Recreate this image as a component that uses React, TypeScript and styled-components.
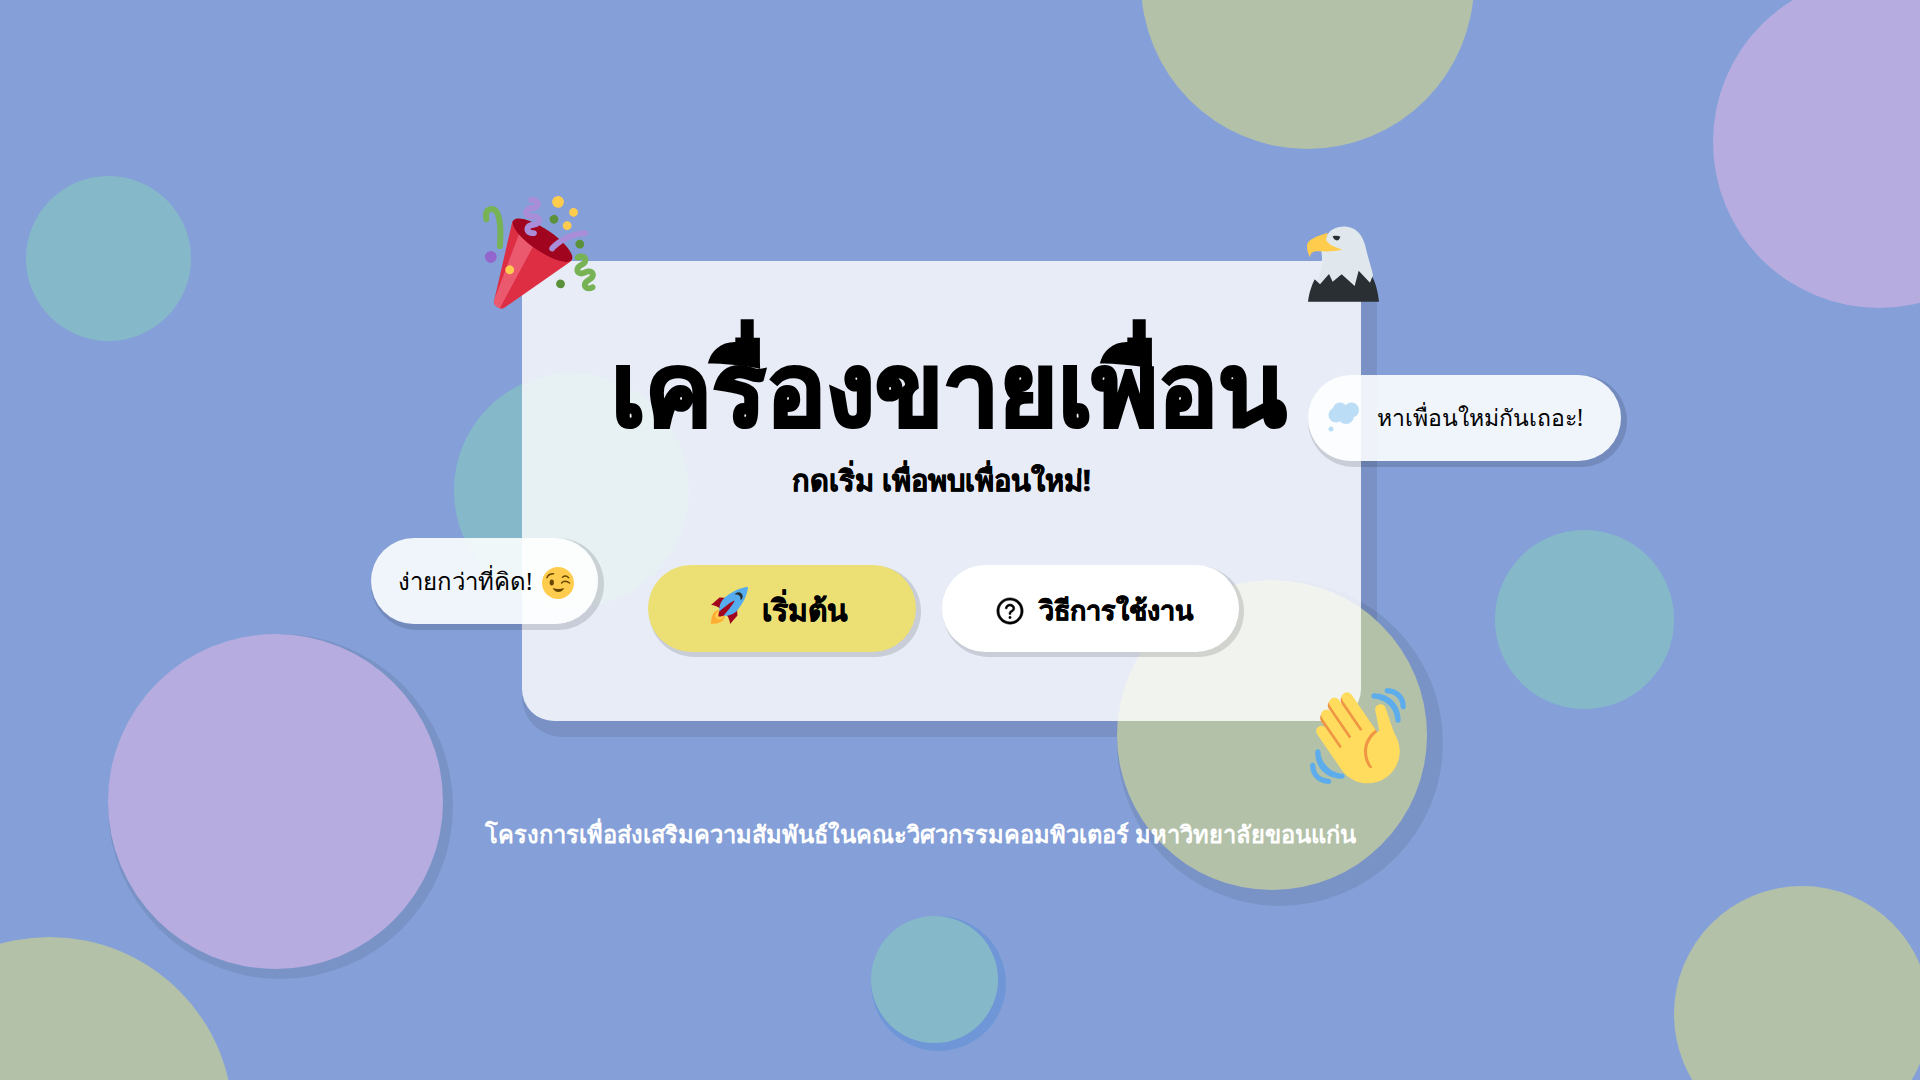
import styled, { createGlobalStyle } from 'styled-components';
import { AiOutlineQuestionCircle } from 'react-icons/ai';

const GlobalStyle = createGlobalStyle`
	html, body {
		margin: 0;
		padding: 0;
	}
	body {
		font-family: 'Noto Sans', 'Open Sans', sans-serif;
		color: #000;
	}
`;

const Stage = styled.main`
	position: relative;
	width: 1920px;
	height: 1080px;
	overflow: hidden;
	background: #85a0d8;
	box-sizing: border-box;
	padding: 261px 0 0 522px;
	display: flex;
	flex-direction: column;
	align-items: flex-start;
`;

const Circle = styled.div<{ $x: number; $y: number; $d: number; $c: string; $s?: number; $sc?: string }>`
	position: absolute;
	left: ${(p) => p.$x}px;
	top: ${(p) => p.$y}px;
	width: ${(p) => p.$d}px;
	height: ${(p) => p.$d}px;
	border-radius: 50%;
	background: ${(p) => p.$c};
	box-shadow: ${(p) =>
		p.$s ? `${p.$s}px ${p.$s}px 0 ${p.$s}px ${p.$sc ?? 'rgba(0, 0, 0, 0.08)'}` : 'none'};
`;

/* sits under the circles: the big green one covers the card's shadow */
const CardShadow = styled.div`
	position: absolute;
	left: 522px;
	top: 261px;
	width: 839px;
	height: 460px;
	border-radius: 32px;
	box-shadow: 8px 8px 0 8px rgba(0, 0, 0, 0.09);
`;

const Card = styled.section`
	position: relative;
	width: 839px;
	height: 460px;
	box-sizing: border-box;
	padding-top: 60px;
	border-radius: 32px;
	background: rgba(255, 255, 255, 0.8);
	display: flex;
	flex-direction: column;
	align-items: center;
`;

const Title = styled.h1`
	margin: 0 0 0 14px;
	font-size: 100px;
	line-height: 130px;
	font-weight: 800;
	-webkit-text-stroke: 3px #000;
`;

const Subtitle = styled.h2`
	margin: 9px 0 0;
	font-size: 29px;
	line-height: 40px;
	font-weight: 700;
	-webkit-text-stroke: 0.6px #000;
`;

const Actions = styled.div`
	margin: 65px 0 0 4px;
	display: flex;
	gap: 26px;
`;

const ActionButton = styled.button<{ $primary?: boolean }>`
	height: 87px;
	width: ${(p) => (p.$primary ? 268 : 297)}px;
	box-sizing: border-box;
	padding: 4px ${(p) => (p.$primary ? 7 : 0)}px 0 ${(p) => (p.$primary ? 0 : 7)}px;
	border: 0;
	border-radius: 44px;
	background: ${(p) => (p.$primary ? '#ecdf74' : '#fff')};
	box-shadow: 3px 3px 0 2px rgba(0, 0, 0, 0.13);
	display: flex;
	align-items: center;
	justify-content: center;
	gap: 14px;
	font-family: inherit;
	font-size: ${(p) => (p.$primary ? 30 : 27)}px;
	font-weight: 700;
	-webkit-text-stroke: 0.6px #000;
	color: #000;
`;

const Bubble = styled.div<{ $side: 'left' | 'right' }>`
	position: absolute;
	top: ${(p) => (p.$side === 'left' ? 277 : 114)}px;
	left: ${(p) => (p.$side === 'left' ? -151 : 786)}px;
	height: 86px;
	width: ${(p) => (p.$side === 'left' ? 227 : 313)}px;
	box-sizing: border-box;
	padding-left: ${(p) => (p.$side === 'left' ? 27 : 19)}px;
	border-radius: 43px;
	background: rgba(255, 255, 255, 0.88);
	box-shadow: 3px 3px 0 3px rgba(0, 0, 0, 0.13);
	display: flex;
	align-items: center;
	gap: ${(p) => (p.$side === 'left' ? 10 : 16)}px;
	font-size: ${(p) => (p.$side === 'left' ? 24 : 23)}px;
	white-space: nowrap;
`;

const Sticker = styled.svg<{ $x: number; $y: number; $w: number; $h?: number; $r?: number }>`
	position: absolute;
	left: ${(p) => p.$x}px;
	top: ${(p) => p.$y}px;
	width: ${(p) => p.$w}px;
	height: ${(p) => p.$h ?? p.$w}px;
	transform: rotate(${(p) => p.$r ?? 0}deg);
`;

const WinkFace = styled.svg`
	width: 32px;
	height: 32px;
	margin-top: 3px;
`;

const RocketIcon = styled.svg`
	width: 38px;
	height: 38px;
	margin-bottom: 10px;
`;

const Footer = styled.p`
	position: relative;
	margin: 96px 0 0 -37px;
	font-size: 23.7px;
	line-height: 34px;
	font-weight: 700;
	color: #fff;
	white-space: nowrap;
`;

const GREEN = '#b3c1a9';
const TEAL = '#85b9c9';
const PURPLE = '#b6acdf';

function Popper() {
	return (
		<Sticker $x={-38} $y={-66} $w={106} $r={-11} viewBox="0 0 36 36">
			<path fill="#DD2E44" d="M11.626 7.488c-.112.112-.197.247-.268.395l-.008-.008L.134 33.141l.011.011c-.208.403.14 1.223.853 1.937.713.713 1.533 1.061 1.936.853l.01.01L28.21 24.735l-.008-.009c.147-.07.282-.155.395-.269 1.562-1.562-.971-6.627-5.656-11.313-4.687-4.686-9.752-7.218-11.315-5.656z" />
			<path fill="#EA596E" d="M13 12L.416 32.506l-.282.635.011.011c-.208.403.14 1.223.853 1.937.232.232.473.408.709.557L17 17l-4-5z" />
			<path fill="#A0041E" d="M23.012 13.066c4.67 4.672 7.263 9.652 5.789 11.124-1.473 1.474-6.453-1.118-11.126-5.788-4.671-4.672-7.263-9.654-5.79-11.127 1.474-1.473 6.454 1.119 11.127 5.791z" />
			<path fill="#AA8DD8" d="M18.59 13.609c-.199.161-.459.245-.734.215-.868-.094-1.598-.396-2.109-.873-.541-.505-.808-1.183-.735-1.862.128-1.192 1.324-2.286 3.363-2.066.793.085 1.147-.17 1.159-.292.014-.121-.277-.446-1.07-.532-.868-.094-1.598-.396-2.11-.873-.541-.505-.809-1.183-.735-1.862.13-1.192 1.325-2.286 3.362-2.065.578.062.883-.057 1.012-.134.103-.063.144-.123.148-.158.012-.121-.275-.446-1.07-.532-.549-.06-.947-.552-.886-1.102.059-.549.55-.946 1.101-.886 2.037.219 2.973 1.542 2.844 2.735-.13 1.194-1.325 2.286-3.364 2.067-.578-.063-.88.057-1.01.134-.103.062-.145.123-.149.157-.013.122.276.446 1.071.532 2.037.22 2.973 1.542 2.844 2.735-.129 1.192-1.324 2.286-3.362 2.065-.578-.062-.882.058-1.012.134-.104.064-.144.124-.148.158-.013.121.276.446 1.07.532.548.06.947.553.886 1.102-.028.274-.167.511-.366.671z" />
			<path fill="#77B255" d="M30.661 22.857c1.973-.557 3.334.323 3.658 1.478.324 1.154-.378 2.615-2.35 3.17-.77.216-1.001.584-.97.701.034.118.425.312 1.193.095 1.972-.555 3.333.325 3.657 1.479.326 1.155-.378 2.614-2.351 3.17-.769.216-1.001.585-.967.702.033.117.423.311 1.192.095.53-.149 1.084.16 1.233.691.148.532-.161 1.084-.693 1.234-1.971.555-3.333-.323-3.659-1.479-.324-1.154.379-2.613 2.353-3.169.77-.217 1.001-.584.967-.702-.032-.117-.422-.312-1.19-.096-1.974.556-3.334-.322-3.659-1.479-.325-1.154.378-2.613 2.351-3.17.768-.215.999-.585.967-.701-.034-.118-.423-.312-1.192-.096-.532.15-1.083-.16-1.233-.691-.149-.53.161-1.082.693-1.232z" />
			<path fill="#AA8DD8" d="M23.001 20.16c-.294 0-.584-.129-.782-.375-.345-.432-.274-1.061.156-1.406.218-.175 5.418-4.259 12.767-3.208.547.078.927.584.849 1.131-.078.546-.58.93-1.132.848-6.493-.922-11.187 2.754-11.233 2.791-.186.148-.406.219-.625.219z" />
			<path fill="#77B255" d="M5.754 16c-.095 0-.192-.014-.288-.042-.529-.159-.829-.716-.67-1.245 1.133-3.773 2.16-9.794.898-11.364-.141-.178-.354-.353-.842-.316-.938.072-.849 2.051-.848 2.071.042.551-.372 1.031-.922 1.072-.559.034-1.031-.372-1.072-.923-.103-1.379.326-4.035 2.692-4.214 1.056-.08 1.933.287 2.552 1.057 2.371 2.951-.036 11.506-.542 13.192-.13.433-.528.712-.958.712z" />
			<circle fill="#5C913B" cx="25.5" cy="9.5" r="1.5" />
			<circle fill="#9266CC" cx="2" cy="18" r="2" />
			<circle fill="#5C913B" cx="32.5" cy="19.5" r="1.5" />
			<circle fill="#5C913B" cx="23.5" cy="31.5" r="1.5" />
			<circle fill="#FFCC4D" cx="28" cy="4" r="2" />
			<circle fill="#FFCC4D" cx="32.5" cy="8.5" r="1.5" />
			<circle fill="#FFCC4D" cx="29.5" cy="12.5" r="1.5" />
			<circle fill="#FFCC4D" cx="7.5" cy="23.5" r="1.5" />
		</Sticker>
	);
}

function Eagle() {
	return (
		<Sticker $x={758} $y={-51} $w={120} $h={100} viewBox="0 0 360 300">
			<path fill="#E1E8ED" d="M138 85C144 60 170 48 200 50C232 53 248 78 256 108C263 140 272 165 279 195L270 225L108 225C122 190 130 160 124 124Z" />
			<path fill="#292F33" d="M84 275C88 245 97 222 104 208L120 223L147 192L158 215L185 193L224 228L236 182L270 218L277 200C290 225 295 255 297 275Z" />
			<path fill="#FFCC4D" d="M143 68C115 78 85 85 81 105C80 120 86 135 90 142C92 128 95 122 125 124C140 125 170 123 186 120C175 112 150 110 138 90Z" />
			<path fill="#292F33" d="M158 79C165 77 175 77 181 80C179 88 174 92 169 91C164 90 160 85 158 79Z" />
		</Sticker>
	);
}

function Wave() {
	return (
		<Sticker $x={788} $y={427} $w={96} viewBox="0 0 36 36">
			<path fill="#EF9645" d="M4.861 9.147c.94-.657 2.357-.531 3.201.166l-.968-1.407c-.779-1.111-.5-2.313.612-3.093 1.112-.777 4.263 1.312 4.263 1.312-.786-1.122-.639-2.544.483-3.331 1.122-.784 2.67-.513 3.456.611l10.42 14.72L25 31l-11.083-4.042L4.25 12.625c-.793-1.129-.519-2.686.611-3.478z" />
			<path fill="#FFDC5D" d="M2.695 17.336s-1.132-1.65.519-2.781c1.649-1.131 2.78.518 2.78.518l5.251 7.658c.181-.302.379-.6.6-.894L4.557 11.21s-1.131-1.649.519-2.78c1.649-1.131 2.78.518 2.78.518l6.855 9.997c.255-.208.516-.417.785-.622L7.549 6.732s-1.131-1.649.519-2.78c1.649-1.131 2.78.518 2.78.518l7.947 11.589c.292-.179.581-.334.871-.498L12.238 4.729s-1.131-1.649.518-2.78c1.649-1.131 2.78.518 2.78.518l7.854 11.454 1.194 1.742c-4.948 3.394-5.419 9.779-2.592 13.902.565.825 1.39.26 1.39.26-3.393-4.949-2.357-10.51 2.592-13.903L24.515 8.62s-.545-1.924 1.378-2.47c1.924-.545 2.47 1.379 2.47 1.379l1.685 5.004c.668 1.984 1.379 3.961 2.32 5.831 2.657 5.28 1.07 11.842-3.94 15.279-5.465 3.747-12.936 2.354-16.684-3.11L2.695 17.336z" />
			<path fill="#5DADEC" d="M12 32.042C8 32.042 3.958 28 3.958 24c0-.553-.405-1-.958-1s-1.042.447-1.042 1C1.958 30 6 34.042 12 34.042c.553 0 1-.405 1-.958s-.447-1.042-1-1.042z" />
			<path fill="#5DADEC" d="M7 34c-3 0-5-2-5-5 0-.553-.447-1-1-1s-1 .447-1 1c0 4 3 7 7 7 .553 0 1-.447 1-1s-.447-1-1-1zM24 2c-.553 0-1 .448-1 1s.447 1 1 1c4 0 8 3.589 8 8 0 .552.448 1 1 1s1-.448 1-1c0-5.514-4-10-10-10z" />
			<path fill="#5DADEC" d="M29 .042c-.552 0-1 .406-1 .958s.448 1.042 1 1.042c3 0 4.958 2.225 4.958 4.958 0 .552.489 1 1.042 1s.958-.448.958-1C35.958 3.163 33 .042 29 .042z" />
		</Sticker>
	);
}

function Rocket() {
	return (
		<RocketIcon viewBox="0 0 36 36">
			<path fill="#A0041E" d="M1 17l8-7 16 1 1 16-7 8s.001-5.999-6-12-12-6-12-6z" />
			<path fill="#FFAC33" d="M.973 35s-.036-7.979 2.985-11S15 21.187 15 21.187 14.999 29 11.999 32c-3 3-11.026 3-11.026 3z" />
			<circle fill="#FFCC4D" cx="8.999" cy="27" r="4" />
			<path fill="#55ACEE" d="M35.999 0s-10 0-22 10c-6 5-6 14-4 16s11 2 16-4c10-12 10-22 10-22z" />
			<path fill="#292F33" d="M26.999 5c-1.623 0-3.013.971-3.641 2.36.502-.227 1.055-.36 1.641-.36 2.209 0 4 1.791 4 4 0 .586-.133 1.139-.359 1.64 1.389-.627 2.359-2.017 2.359-3.64 0-2.209-1.791-4-4-4z" />
			<path fill="#A0041E" d="M8 28s0-4 1-5 13.001-10.999 14-10-9.001 13-10.001 14S8 28 8 28z" />
		</RocketIcon>
	);
}

function Wink() {
	return (
		<WinkFace viewBox="0 0 36 36">
			<circle fill="#FFCC4D" cx="18" cy="18" r="18" />
			<ellipse fill="#664500" cx="11" cy="17.5" rx="2.4" ry="3.4" />
			<path fill="none" stroke="#664500" strokeWidth="1.6" strokeLinecap="round" d="M5.5 12C6.5 9 9.5 7.5 13 7.5M22 18c2-2.5 6-2.5 9 0M23 11.5c2-1.5 5-1.5 7 .5" />
			<path fill="#664500" d="M12 23.5c1.5 3 3.5 4.5 6.5 4.5s5-1.5 6.5-4.5c-4 1.5-9 1.5-13 0z" />
		</WinkFace>
	);
}

function Cloud() {
	return (
		<svg width="34" height="36" viewBox="0 -2 34 36">
			<g fill="#BBDDF5">
				<circle cx="13" cy="7.5" r="7" />
				<circle cx="24.5" cy="8" r="7.5" />
				<circle cx="9" cy="13" r="7.5" />
				<circle cx="19" cy="14" r="8" />
				<circle cx="4" cy="27" r="2.5" />
			</g>
		</svg>
	);
}

export default function App() {
	return (
		<Stage>
			<GlobalStyle />
			<CardShadow />
			<Circle $x={1141} $y={-184} $d={333} $c={GREEN} />
			<Circle $x={1713} $y={-24} $d={332} $c={PURPLE} />
			<Circle $x={26} $y={176} $d={165} $c={TEAL} />
			<Circle $x={454} $y={373} $d={235} $c={TEAL} />
			<Circle $x={108} $y={634} $d={335} $c={PURPLE} $s={5} />
			<Circle $x={-134} $y={937} $d={367} $c={GREEN} />
			<Circle $x={871} $y={916} $d={127} $c={TEAL} $s={4} $sc="#6f97d8" />
			<Circle $x={1117} $y={580} $d={310} $c={GREEN} $s={8} />
			<Circle $x={1495} $y={530} $d={179} $c={TEAL} />
			<Circle $x={1674} $y={886} $d={256} $c={GREEN} />
			<Card>
				<Popper />
				<Eagle />
				<Wave />
				<Title>เครื่องขายเพื่อน</Title>
				<Subtitle>กดเริ่ม เพื่อพบเพื่อนใหม่!</Subtitle>
				<Actions>
					<ActionButton $primary>
						<Rocket />
						เริ่มต้น
					</ActionButton>
					<ActionButton>
						<AiOutlineQuestionCircle size={30} stroke="currentColor" strokeWidth={20} />
						วิธีการใช้งาน
					</ActionButton>
				</Actions>
				<Bubble $side="left">
					ง่ายกว่าที่คิด!
					<Wink />
				</Bubble>
				<Bubble $side="right">
					<Cloud />
					หาเพื่อนใหม่กันเถอะ!
				</Bubble>
			</Card>
			<Footer>โครงการเพื่อส่งเสริมความสัมพันธ์ในคณะวิศวกรรมคอมพิวเตอร์ มหาวิทยาลัยขอนแก่น</Footer>
		</Stage>
	);
}
